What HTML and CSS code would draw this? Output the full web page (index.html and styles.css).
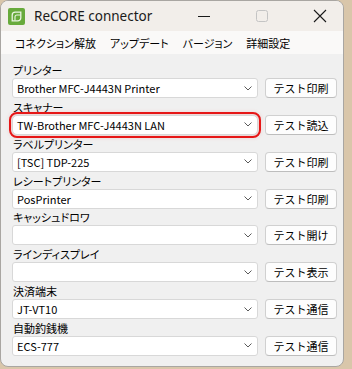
FILE: index.html
```html
<!DOCTYPE html>
<html lang="ja">
<head>
    <meta charset="UTF-8">
    <title>ReCORE connector</title>
    <link rel="stylesheet" href="styles.css">
</head>
<body>
    <div class="window">
        <!-- Title bar -->
        <div class="titlebar">
            <svg class="app-icon" width="17" height="17" viewBox="0 0 17 17">
                <rect width="17" height="17" rx="2" fill="#68aa3c"/>
                <path d="M4.2 12.8 V7.2 a3 3 0 0 1 3-3 H12.8 V9.8 a3 3 0 0 1 -3 3 Z" fill="none" stroke="#eaf4e2" stroke-width="1.3"/>
                <path d="M7 12.6 V9 a2 2 0 0 1 2-2 H12.6" fill="none" stroke="#eaf4e2" stroke-width="1.1"/>
            </svg>
            <span class="title">ReCORE connector</span>
            <div class="caption-buttons">
                <span class="cap-btn">
                    <svg width="12" height="12" viewBox="0 0 12 12"><line x1="0" y1="6.5" x2="12" y2="6.5" stroke="#1a1a1a" stroke-width="1"/></svg>
                </span>
                <span class="cap-btn">
                    <svg width="12" height="12" viewBox="0 0 12 12"><rect x="0.5" y="0.5" width="11" height="11" rx="2" fill="none" stroke="#c4c4c4" stroke-width="1"/></svg>
                </span>
                <span class="cap-btn">
                    <svg width="14" height="14" viewBox="0 0 14 14"><path d="M1 1 L13 13 M13 1 L1 13" stroke="#1a1a1a" stroke-width="1.1"/></svg>
                </span>
            </div>
        </div>

        <!-- Menu -->
        <nav class="menubar">
            <span class="menu-item">コネクション解放</span>
            <span class="menu-item">アップデート</span>
            <span class="menu-item">バージョン</span>
            <span class="menu-item">詳細設定</span>
        </nav>

        <!-- Device settings -->
        <main class="settings">
            <div class="field">
                <div class="field-label">プリンター</div>
                <div class="field-row">
                    <div class="combo"><span class="combo-text">Brother MFC-J4443N Printer</span><svg class="chevron" width="8" height="5" viewBox="0 0 8 5"><polyline points="0.5,0.5 4,4 7.5,0.5" fill="none" stroke="#5a5a5a"/></svg></div>
                    <button class="test-btn">テスト印刷</button>
                </div>
            </div>
            <div class="field">
                <div class="field-label">スキャナー</div>
                <div class="field-row">
                    <div class="combo combo-marked"><span class="combo-text">TW-Brother MFC-J4443N LAN</span><svg class="chevron" width="8" height="5" viewBox="0 0 8 5"><polyline points="0.5,0.5 4,4 7.5,0.5" fill="none" stroke="#5a5a5a"/></svg></div>
                    <button class="test-btn">テスト読込</button>
                </div>
            </div>
            <div class="field">
                <div class="field-label">ラベルプリンター</div>
                <div class="field-row">
                    <div class="combo"><span class="combo-text">[TSC] TDP-225</span><svg class="chevron" width="8" height="5" viewBox="0 0 8 5"><polyline points="0.5,0.5 4,4 7.5,0.5" fill="none" stroke="#5a5a5a"/></svg></div>
                    <button class="test-btn">テスト印刷</button>
                </div>
            </div>
            <div class="field">
                <div class="field-label">レシートプリンター</div>
                <div class="field-row">
                    <div class="combo"><span class="combo-text">PosPrinter</span><svg class="chevron" width="8" height="5" viewBox="0 0 8 5"><polyline points="0.5,0.5 4,4 7.5,0.5" fill="none" stroke="#5a5a5a"/></svg></div>
                    <button class="test-btn">テスト印刷</button>
                </div>
            </div>
            <div class="field">
                <div class="field-label">キャッシュドロワ</div>
                <div class="field-row">
                    <div class="combo"><span class="combo-text"></span><svg class="chevron" width="8" height="5" viewBox="0 0 8 5"><polyline points="0.5,0.5 4,4 7.5,0.5" fill="none" stroke="#5a5a5a"/></svg></div>
                    <button class="test-btn">テスト開け</button>
                </div>
            </div>
            <div class="field">
                <div class="field-label">ラインディスプレイ</div>
                <div class="field-row">
                    <div class="combo"><span class="combo-text"></span><svg class="chevron" width="8" height="5" viewBox="0 0 8 5"><polyline points="0.5,0.5 4,4 7.5,0.5" fill="none" stroke="#5a5a5a"/></svg></div>
                    <button class="test-btn">テスト表示</button>
                </div>
            </div>
            <div class="field">
                <div class="field-label">決済端末</div>
                <div class="field-row">
                    <div class="combo"><span class="combo-text">JT-VT10</span><svg class="chevron" width="8" height="5" viewBox="0 0 8 5"><polyline points="0.5,0.5 4,4 7.5,0.5" fill="none" stroke="#5a5a5a"/></svg></div>
                    <button class="test-btn">テスト通信</button>
                </div>
            </div>
            <div class="field">
                <div class="field-label">自動釣銭機</div>
                <div class="field-row">
                    <div class="combo"><span class="combo-text">ECS-777</span><svg class="chevron" width="8" height="5" viewBox="0 0 8 5"><polyline points="0.5,0.5 4,4 7.5,0.5" fill="none" stroke="#5a5a5a"/></svg></div>
                    <button class="test-btn">テスト通信</button>
                </div>
            </div>
        </main>
    </div>
</body>
</html>
```

FILE: styles.css
```css
*{
    box-sizing: border-box;
}
body{
    margin: 0;
    width: 352px;
    height: 369px;
    background-color: #d9c6aa;
    font-family: "Noto Sans CJK JP", sans-serif;
    font-feature-settings: "palt";
    overflow: hidden;
}
/*
* Window frame
*/
.window{
    width: 344px;
    height: 367px;
    border: 1px solid #a9a6a2;
    border-radius: 8px;
    overflow: hidden;
    background-color: #f0f0f0;
    display: flex;
    flex-direction: column;
}
/*
* Title bar
*/
.titlebar{
    height: 30px;
    background-color: #f2eeea;
    display: flex;
    align-items: center;
    padding-left: 7px;
}
.app-icon{
    flex: none;
}
.title{
    margin-left: 9px;
    font-family: "Noto Sans", sans-serif;
    font-size: 13.5px;
    color: #1a1a1a;
}
.caption-buttons{
    margin-left: auto;
    display: flex;
    gap: 12px;
    height: 100%;
}
.cap-btn{
    width: 46px;
    display: flex;
    align-items: center;
    justify-content: center;
}
/*
* Menu bar
*/
.menubar{
    height: 23px;
    background-color: #faf9f8;
    display: flex;
    align-items: center;
    gap: 14px;
    padding-left: 14px;
    font-size: 11px;
    color: #000;
}
/*
* Settings
*/
.settings{
    padding: 8px 6px 0 11px;
}
.field-label{
    height: 16px;
    line-height: 16px;
    font-size: 11px;
    padding-left: 1px;
    color: #000;
}
.field-row{
    height: 20.85px;
    display: flex;
    gap: 7px;
}
.combo{
    width: 246px;
    height: 20px;
    background-color: #fff;
    border: 1px solid #d8d8d8;
    border-radius: 3px;
    display: flex;
    align-items: center;
    padding: 0 5px 0 4px;
    font-size: 11px;
    color: #000;
}
.combo-text{
    flex: 1;
    white-space: nowrap;
}
.chevron{
    flex: none;
}
.combo-marked{
    outline: 2px solid #e61717;
    outline-offset: 1px;
    border-radius: 5px;
    box-shadow: 0 0 4px 3px rgba(230, 23, 23, 0.12);
}
.test-btn{
    width: 72px;
    height: 20px;
    background-color: #fdfdfd;
    border: 1px solid #d0d0d0;
    border-bottom-color: #bdbdbd;
    border-radius: 4px;
    font-family: inherit;
    font-size: 11px;
    color: #000;
    padding: 0;
}
```
